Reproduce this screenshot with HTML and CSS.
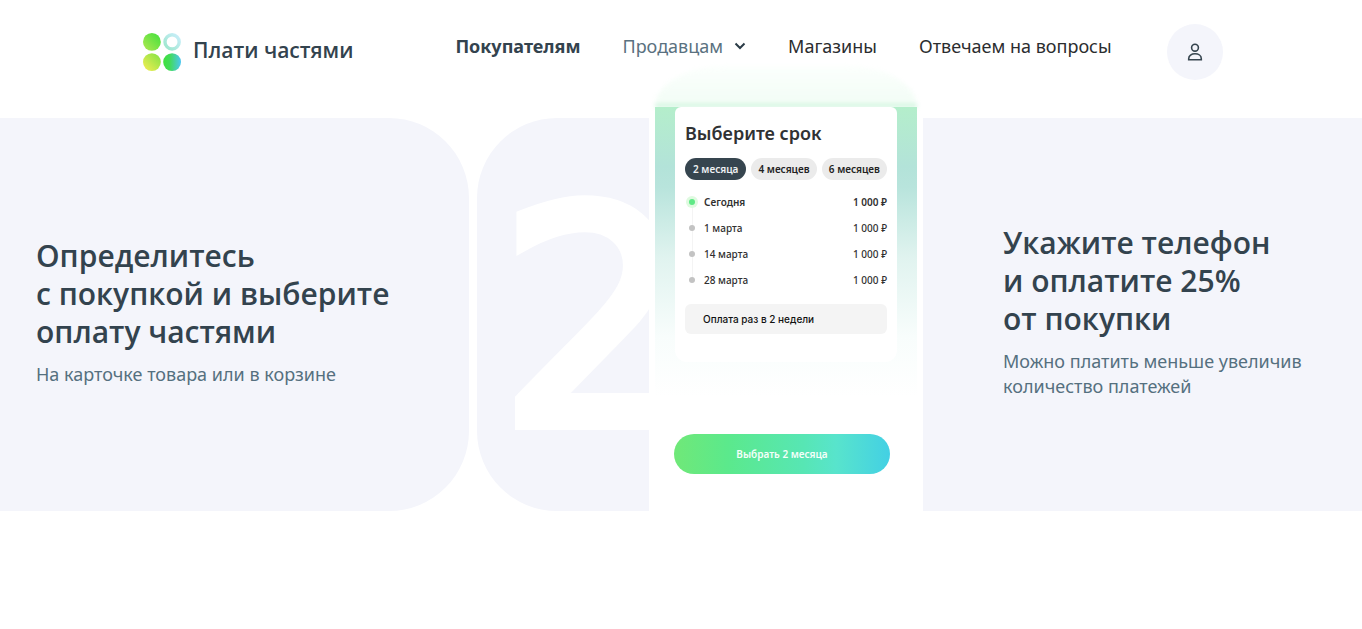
FILE: index.html
```html
<!DOCTYPE html>
<html lang="ru">
<head>
<meta charset="utf-8">
<meta name="viewport" content="width=device-width, initial-scale=1">
<title>Плати частями</title>
<link rel="stylesheet" href="styles.css">
</head>
<body>
<header class="header">
  <a class="logo" href="#">
    <svg class="logo-mark" viewBox="0 0 38 38" aria-hidden="true">
      <defs>
        <linearGradient id="lime" x1="0" y1="1" x2="1" y2="0"><stop offset="0" stop-color="#b4e84f"/><stop offset="1" stop-color="#3fe03d"/></linearGradient>
        <linearGradient id="yellow" x1="0" y1="1" x2="1" y2="0"><stop offset="0" stop-color="#f7ee52"/><stop offset="1" stop-color="#7fe246"/></linearGradient>
        <linearGradient id="aqua" x1="0" y1="0" x2="1" y2="0"><stop offset="0" stop-color="#3fe03d"/><stop offset=".35" stop-color="#42dc55"/><stop offset="1" stop-color="#4cc6f2"/></linearGradient>
        <linearGradient id="ring" x1="0" y1="1" x2="1" y2="0"><stop offset="0" stop-color="#9ce6cb"/><stop offset="1" stop-color="#c9eefb"/></linearGradient>
      </defs>
      <circle cx="8.9" cy="8.9" r="8.9" fill="url(#lime)"/>
      <circle cx="29.1" cy="8.9" r="7.1" fill="none" stroke="url(#ring)" stroke-width="3.4"/>
      <circle cx="8.9" cy="29.1" r="8.9" fill="url(#yellow)"/>
      <circle cx="29.1" cy="29.1" r="8.9" fill="url(#aqua)"/>
    </svg>
    <span class="logo-name">Плати частями</span>
  </a>
  <nav class="nav">
    <a class="nav-link nav-link-active" href="#">Покупателям</a>
    <a class="nav-link nav-link-muted" href="#">Продавцам
      <svg class="chevron" viewBox="0 0 12 8" aria-hidden="true"><path d="M1.500 1.500 6 6l4.500-4.500" fill="none" stroke="#2b3c47" stroke-width="2"/></svg>
    </a>
    <a class="nav-link" href="#">Магазины</a>
    <a class="nav-link" href="#">Отвечаем на вопросы</a>
  </nav>
  <button class="profile" type="button" aria-label="Профиль">
    <svg viewBox="0 0 16 18" aria-hidden="true"><g fill="none" stroke="#36454f" stroke-width="1.600"><circle cx="8" cy="4.700" r="3.400"/><path d="M1.700 16.700v-1C1.700 12.700 4.500 10.800 8 10.800s6.300 1.900 6.300 4.900v1z"/></g></svg>
  </button>
</header>
<main class="steps">
  <section class="step step-first">
    <h2 class="step-title">Определитесь<br>с покупкой и выберите<br>оплату частями</h2>
    <p class="step-text">На карточке товара или в корзине</p>
  </section>
  <section class="step step-second">
    <div class="number" aria-hidden="true">2</div>
    <div class="phone">
      <div class="screen">
        <div class="plan">
          <h3 class="plan-title">Выберите срок</h3>
          <div class="terms">
            <button class="term term-active" type="button">2 месяца</button>
            <button class="term" type="button">4 месяцев</button>
            <button class="term" type="button">6 месяцев</button>
          </div>
          <ul class="payments">
            <li class="payment payment-current"><span>Сегодня</span><span class="sum">1 000 ₽</span></li>
            <li class="payment"><span>1 марта</span><span class="sum">1 000 ₽</span></li>
            <li class="payment"><span>14 марта</span><span class="sum">1 000 ₽</span></li>
            <li class="payment"><span>28 марта</span><span class="sum">1 000 ₽</span></li>
          </ul>
          <p class="period">Оплата раз в 2 недели</p>
        </div>
      </div>
      <button class="choose" type="button">Выбрать 2 месяца</button>
    </div>
    <div class="step-copy">
      <h2 class="step-title">Укажите телефон<br>и оплатите 25%<br>от покупки</h2>
      <p class="step-text">Можно платить меньше увеличив<br>количество платежей</p>
    </div>
  </section>
</main>
</body>
</html>
```
FILE: styles.css
```css
* { box-sizing: border-box; }
body {
  margin: 0;
  background: #fff;
  color: #2b2d2f;
  font-family: "Noto Sans", "Open Sans", sans-serif;
  overflow-x: hidden;
}
h2, h3, p, ul { margin: 0; padding: 0; }
ul { list-style: none; }
a { color: inherit; text-decoration: none; }
button { border: 0; padding: 0; font-family: inherit; cursor: pointer; }

.header {
  position: relative;
  z-index: 2;
  display: flex;
  align-items: center;
  padding: 24px 139px 38px 143px;
}
.logo {
  display: flex;
  align-items: center;
  gap: 12px;
  color: #33434e;
  font: 600 21px/30px "Open Sans", sans-serif;
  white-space: nowrap;
}
.logo-mark { width: 38px; height: 38px; }
.logo-name { padding-bottom: 4px; }
.nav {
  display: flex;
  gap: 42px;
  margin: 0 auto 0 102px;
  padding-bottom: 12px;
}
.nav-link {
  display: flex;
  align-items: center;
  font-size: 18px;
  line-height: 26px;
  white-space: nowrap;
}
.nav-link-active { color: #33434e; font-weight: 700; }
.nav-link-muted { color: #5a7180; gap: 11px; }
.chevron { width: 12px; height: 8px; }
.profile {
  display: grid;
  place-items: center;
  width: 56px;
  height: 56px;
  border-radius: 50%;
  background: #f4f5fb;
}
.profile svg { width: 16px; height: 18px; }

.steps {
  display: grid;
  grid-template-columns: minmax(0, 469fr) minmax(0, 885fr);
  gap: 8px;
}
.step { background: #f4f5fb; }
.step-first {
  display: flex;
  flex-direction: column;
  justify-content: center;
  padding: 0 0 6px 36px;
  border-radius: 0 80px 80px 0;
}
.step-second {
  display: flex;
  border-radius: 80px 0 0 80px;
}
.step-title {
  color: #33434e;
  font: 600 30px/38px "Open Sans", sans-serif;
  white-space: nowrap;
}
.step-text {
  margin-top: 11px;
  color: #55707f;
  font-size: 18px;
  line-height: 25px;
  white-space: nowrap;
}
.step-copy {
  align-self: center;
  padding: 0 0 6px 80px;
}
.number {
  flex: none;
  width: 172px;
  height: 393px;
  padding: 0 0 0 22px;
  color: #fff;
  font: 400 300px/406px "DejaVu Sans", sans-serif;
  -webkit-text-stroke: 12px #fff;
}

.phone {
  position: relative;
  flex: none;
  display: flex;
  flex-direction: column;
  align-items: center;
  width: 274px;
  margin-top: -11px;
  background: #fff;
}
.phone::before {
  content: "";
  position: absolute;
  left: 6px;
  right: 6px;
  bottom: 100%;
  height: 41px;
  border-radius: 70px 70px 0 0 / 41px 41px 0 0;
  background: linear-gradient(#fcfffd, #f3fdf6 90%, #b4eecb);
  filter: blur(2px);
}
.screen {
  position: relative;
  width: 262px;
  padding: 0 20px 38px;
  background: linear-gradient(#b4eecb 0, #b3e3d9 60px, #b8e4dc 80px, #e0f3ef 150px, #f8fdfc 230px, #fff 290px);
}
.plan {
  padding: 14px 10px 28px;
  border-radius: 6px 6px 12px 12px;
  background: #fff;
}
.plan-title {
  color: #303234;
  font-size: 18px;
  font-weight: 600;
  line-height: 24px;
}
.terms {
  display: flex;
  gap: 5px;
  margin-top: 13px;
}
.term {
  flex: 65 1 0;
  height: 22px;
  border-radius: 11px;
  background: #ebebeb;
  color: #222;
  font-size: 10px;
  font-weight: 600;
  white-space: nowrap;
}
.term-active { flex-grow: 61; background: #36454f; color: #eef1f3; }
.payments { margin-top: 9px; }
.payment {
  position: relative;
  display: flex;
  justify-content: space-between;
  padding-left: 19px;
  color: #303030;
  font-size: 10px;
  font-weight: 500;
  line-height: 26px;
}
.payment-current { font-weight: 600; }
.payment::before {
  content: "";
  position: absolute;
  z-index: 1;
  left: 4px;
  top: 10px;
  width: 6px;
  height: 6px;
  border-radius: 50%;
  background: #c3c3c3;
}
.payment-current::before {
  background: #5fe986;
  box-shadow: 0 0 0 3px #dffae0;
}
.payment:not(:last-child)::after {
  content: "";
  position: absolute;
  left: 7px;
  top: 13px;
  width: 1px;
  height: 26px;
  background: #f4f4f4;
}
.period {
  margin-top: 11px;
  padding-left: 18px;
  border-radius: 6px;
  background: #f4f4f4;
  color: #111;
  font: 500 10px/30px Inter, sans-serif;
}
.choose {
  width: 216px;
  height: 40px;
  margin: 34px 8px 0 0;
  border-radius: 20px;
  background: linear-gradient(90deg, #70e878, #5be98c 25%, #57e6b4 60%, #58e4cc 75%, #43d0e4);
  color: #f4fffa;
  font-size: 10px;
  font-weight: 600;
}
```
